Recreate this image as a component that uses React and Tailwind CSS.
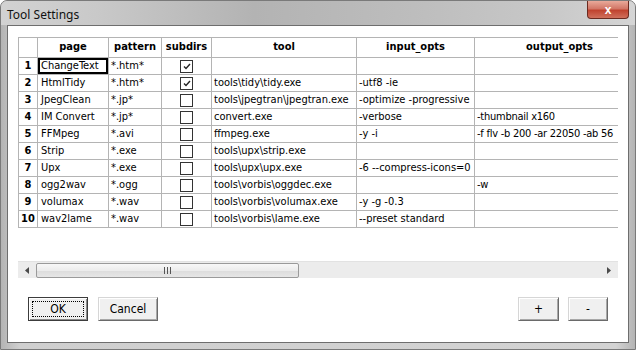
import React from 'react';

const font = { fontFamily: "'DejaVu Sans Condensed', 'Liberation Sans', sans-serif" };

const colW = ['w-[19px]', 'w-[71px]', 'w-[53px]', 'w-[50px]', 'w-[145px]', 'w-[118px]', 'w-[170px]'];
const headers = ['', 'page', 'pattern', 'subdirs', 'tool', 'input_opts', 'output_opts'];

const rows = [
  ['ChangeText', '*.htm*', true, '', '', ''],
  ['HtmlTidy', '*.htm*', true, 'tools\\tidy\\tidy.exe', '-utf8 -ie', ''],
  ['JpegClean', '*.jp*', false, 'tools\\jpegtran\\jpegtran.exe', '-optimize -progressive', ''],
  ['IM Convert', '*.jp*', false, 'convert.exe', '-verbose', '-thumbnail x160'],
  ['FFMpeg', '*.avi', false, 'ffmpeg.exe', '-y -i', '-f flv -b 200 -ar 22050 -ab 56'],
  ['Strip', '*.exe', false, 'tools\\upx\\strip.exe', '', ''],
  ['Upx', '*.exe', false, 'tools\\upx\\upx.exe', '-6 --compress-icons=0', ''],
  ['ogg2wav', '*.ogg', false, 'tools\\vorbis\\oggdec.exe', '', '-w'],
  ['volumax', '*.wav', false, 'tools\\vorbis\\volumax.exe', '-y -g -0.3', ''],
  ['wav2lame', '*.wav', false, 'tools\\vorbis\\lame.exe', '--preset standard', ''],
];

const Check = ({ on }) => (
  <div className="w-[13px] h-[13px] border border-[#333] bg-white flex items-center justify-center">
    {on && (
      <svg width="8" height="7" viewBox="0 0 8 7">
        <path d="M1 3.5 L3 5.5 L7 1" stroke="#222" strokeWidth="1.4" fill="none" />
      </svg>
    )}
  </div>
);

const Btn = ({ label, w, isDefault }) => (
  <div
    className={`${w} h-[24px] relative flex items-center justify-center bg-[#f0f0f0] text-[12px] text-black border ${
      isDefault
        ? 'border-[#3c3c3c] shadow-[inset_1px_1px_0_#ffffff,inset_-1px_-1px_0_#8a8a8a]'
        : 'border-t-[#d6d6d6] border-l-[#d6d6d6] border-r-[#6a6a6a] border-b-[#6a6a6a] shadow-[inset_1px_1px_0_#ffffff,inset_-1px_-1px_0_#a8a8a8]'
    }`}
  >
    {isDefault && <div className="absolute inset-[3px] border border-dotted border-black" />}
    <span>{label}</span>
  </div>
);

const App = () => {
  return (
    <div className="w-[636px] h-[350px] overflow-hidden bg-[linear-gradient(90deg,#b4b4b4_0%,#cfcfcf_3%,#d3d3d3_97%,#b4b4b4_100%)] rounded-t-[7px] border border-[#7a7a7a] relative">
      {/* Title bar */}
      <div className="h-[24px] flex items-center pl-[6px] bg-[linear-gradient(90deg,#d2d2d2_0%,#c9c9c9_15%,#b3b3b3_40%,#bdbdbd_65%,#c7c7c7_85%,#d5d5d5_100%)]">
        <span className="text-[12px] text-[#111] mt-[3px]" style={{ fontFamily: "'Noto Sans', 'Liberation Sans', sans-serif" }}>
          Tool Settings
        </span>
      </div>
      <div className="absolute top-0 right-[6px] w-[42px] h-[18px] rounded-b-[4px] border border-t-0 border-[#6b2a20] bg-[linear-gradient(180deg,#e9a99a_0%,#d27767_45%,#c0432f_55%,#d0705c_100%)] flex items-center justify-center">
        <span className="text-white text-[12px] font-bold leading-none" style={{ fontFamily: "'Liberation Sans', sans-serif" }}>
          x
        </span>
      </div>

      {/* Client area */}
      <div className="ml-[6px] w-[622px] h-[318px] border border-[#6e6e6e] bg-white pl-[10px] pt-[11px]" style={font}>
        <div className="w-[600px] overflow-hidden border-t border-l border-[#b4b4b4] text-[11px] text-black">
          <div className="flex">
            {headers.map((h, i) => (
              <div key={i} className={`${colW[i]} shrink-0 h-[20px] border-r border-b border-[#b4b4b4] flex items-center justify-center font-bold`}>
                {h}
              </div>
            ))}
          </div>
          {rows.map((r, idx) => (
            <div key={idx} className="flex">
              <div className={`${colW[0]} shrink-0 h-[17px] border-r border-b border-[#b4b4b4] flex items-center justify-center font-bold`}>
                {idx + 1}
              </div>
              <div className={`${colW[1]} shrink-0 h-[17px] border-r border-b border-[#b4b4b4] flex items-center`}>
                {idx === 0 ? (
                  <div className="w-full h-full border-2 border-black flex items-center pl-[1px]">{r[0]}</div>
                ) : (
                  <span className="pl-[3px]">{r[0]}</span>
                )}
              </div>
              <div className={`${colW[2]} shrink-0 h-[17px] border-r border-b border-[#b4b4b4] flex items-center pl-[2px] whitespace-nowrap`}>
                {r[1]}
              </div>
              <div className={`${colW[3]} shrink-0 h-[17px] border-r border-b border-[#b4b4b4] flex items-center justify-center`}>
                <Check on={r[2]} />
              </div>
              <div className={`${colW[4]} shrink-0 h-[17px] border-r border-b border-[#b4b4b4] flex items-center pl-[2px] whitespace-nowrap overflow-hidden`}>
                {r[3]}
              </div>
              <div className={`${colW[5]} shrink-0 h-[17px] border-r border-b border-[#b4b4b4] flex items-center pl-[2px] whitespace-nowrap overflow-hidden`}>
                {r[4]}
              </div>
              <div className={`${colW[6]} shrink-0 h-[17px] border-r border-b border-[#b4b4b4] flex items-center pl-[2px] whitespace-nowrap overflow-hidden tracking-[-0.25px]`}>
                {r[5]}
              </div>
            </div>
          ))}
        </div>

        {/* Horizontal scrollbar */}
        <div className="mt-[33px] w-[600px] h-[17px] bg-[#ececec] border-t border-[#e2e2e2] flex items-center">
          <div className="w-[18px] h-full flex items-center justify-center">
            <svg width="4" height="7" viewBox="0 0 4 7">
              <path d="M4 0 L0 3.5 L4 7 Z" fill="#4a4a4a" />
            </svg>
          </div>
          <div className="w-[263px] h-[15px] rounded-[2px] border border-[#9a9a9a] bg-[linear-gradient(180deg,#f8f8f8_0%,#ececec_50%,#dcdcdc_51%,#e6e6e6_100%)] flex items-center justify-center">
            <svg width="8" height="7" viewBox="0 0 8 7">
              <path d="M0.5 0 V7 M3.5 0 V7 M6.5 0 V7" stroke="#555" strokeWidth="1" />
            </svg>
          </div>
          <div className="flex-1" />
          <div className="w-[18px] h-full flex items-center justify-center">
            <svg width="4" height="7" viewBox="0 0 4 7">
              <path d="M0 0 L4 3.5 L0 7 Z" fill="#4a4a4a" />
            </svg>
          </div>
        </div>

        {/* Buttons */}
        <div className="mt-[19px] w-[600px] px-[10px] flex items-center">
          <Btn label="OK" w="w-[60px]" isDefault />
          <div className="w-[10px]" />
          <Btn label="Cancel" w="w-[60px]" />
          <div className="flex-1" />
          <Btn label="+" w="w-[41px]" />
          <div className="w-[9px]" />
          <Btn label="-" w="w-[40px]" />
        </div>
      </div>
    </div>
  );
};

export default App;
